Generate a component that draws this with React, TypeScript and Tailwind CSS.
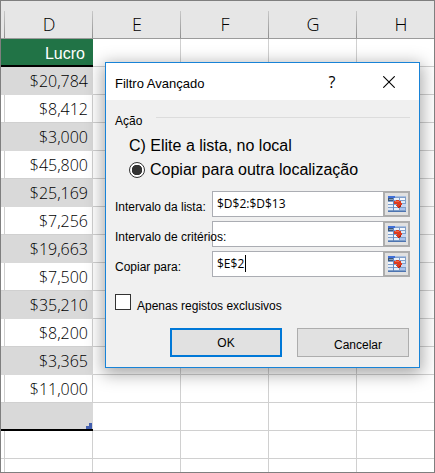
import React from 'react';

const profits = [
  '$20,784',
  '$8,412',
  '$3,000',
  '$45,800',
  '$25,169',
  '$7,256',
  '$19,663',
  '$7,500',
  '$35,210',
  '$8,200',
  '$3,365',
  '$11,000',
];

const otherColumns = ['E', 'F', 'G', 'H'];

const headClass =
  "h-[38px] border-b border-[#9b9b9b] bg-[#e6e6e6] bg-[linear-gradient(#c8c8c8,#8f8f8f)] bg-[length:1px_27px] bg-right-bottom bg-no-repeat p-0 pt-2 text-center text-lg leading-6 font-light";
const cellClass = 'h-7 border-r border-b border-[#d0d0d0] p-0';

function EmptyCells() {
  return (
    <>
      {otherColumns.map((name) => (
        <td key={name} className={cellClass} />
      ))}
      <td className="border-b border-[#d0d0d0] p-0" />
    </>
  );
}

function Sheet() {
  return (
    <table className="w-full min-w-[444px] table-fixed border-separate border-spacing-0 bg-white font-['Open_Sans',sans-serif] text-black">
      <colgroup>
        <col className="w-1" />
        <col className="w-[88px]" />
        <col className="w-[88px]" />
        <col className="w-[88px]" />
        <col className="w-[88px]" />
        <col className="w-[88px]" />
        <col />
      </colgroup>
      <thead>
        <tr>
          <th className={headClass} />
          <th className={headClass}>D</th>
          {otherColumns.map((name) => (
            <th key={name} className={headClass}>
              {name}
            </th>
          ))}
          <th className="border-b border-[#9b9b9b] bg-[#e6e6e6] p-0" />
        </tr>
      </thead>
      <tbody>
        <tr>
          <td className="h-7 border-b-2 border-black bg-[#217346] p-0" />
          <td className="h-7 border-b-2 border-black bg-[#217346] p-0 pt-1 pr-2 text-right font-['Liberation_Sans',Arial,sans-serif] text-base leading-5 text-white">
            Lucro
          </td>
          <EmptyCells />
        </tr>
        {profits.map((value, i) => {
          const tone = i % 2 === 0 ? 'bg-[#d9d9d9] border-[#d9d9d9]' : 'border-[#d0d0d0]';
          return (
            <tr key={value}>
              <td className={`h-7 border-r border-b p-0 ${tone}`} />
              <td
                className={`h-7 border-r border-b p-0 pr-1 text-right text-base leading-6 font-light ${tone}`}
              >
                {value}
              </td>
              <EmptyCells />
            </tr>
          );
        })}
        <tr>
          <td className="h-7 border-b-2 border-black bg-[#d9d9d9] p-0" />
          <td className="relative h-7 border-b-2 border-black bg-[#d9d9d9] p-0">
            <svg className="absolute right-px bottom-0 h-1.5 w-1.5" viewBox="0 0 6 6" aria-hidden="true">
              <path d="M3 0H6V6H0V3H3Z" fill="#4460b0" />
            </svg>
          </td>
          <EmptyCells />
        </tr>
        <tr>
          <td className={cellClass} />
          <td className={cellClass} />
          <EmptyCells />
        </tr>
        <tr>
          <td className="h-[13px] border-r border-[#d0d0d0] p-0" />
          <td className="border-r border-[#d0d0d0] p-0" />
          {otherColumns.map((name) => (
            <td key={name} className="border-r border-[#d0d0d0] p-0" />
          ))}
          <td className="p-0" />
        </tr>
      </tbody>
    </table>
  );
}

function RangeIcon() {
  return (
    <svg className="h-4 w-[18px]" viewBox="0 0 18 16" shapeRendering="crispEdges" aria-hidden="true">
      <rect width="18" height="16" fill="#7f9fca" />
      <rect width="7" height="2" fill="#3f6fd8" />
      <rect x="7" width="11" height="1" fill="#a9bfe0" />
      <rect y="2" width="5" height="3" fill="#3c5878" />
      <rect x="1" y="3" width="4" height="1" fill="#8b9db5" />
      <rect x="6" y="2" width="5" height="2" fill="#e8eff9" />
      <rect x="12" y="2" width="5" height="2" fill="#f5f8fd" />
      <rect x="12" y="5" width="5" height="2" fill="#dfe9f7" />
      <rect y="6" width="5" height="2" fill="#f5f8fd" />
      <rect y="9" width="5" height="2" fill="#e8eff9" />
      <rect y="12" width="5" height="2" fill="#dbe6f6" />
      <rect x="6" y="9" width="3" height="2" fill="#f5f8fd" />
      <rect x="6" y="12" width="5" height="2" fill="#e8eff9" />
      <rect x="13" y="8" width="5" height="3" fill="#c5d6f2" />
      <rect x="12" y="12" width="5" height="2" fill="#a9c3f0" />
      <rect y="15" width="18" height="1" fill="#4d74b0" />
      <rect x="5" y="2" width="1" height="13" fill="#6488bd" />
      <path d="M6 5L9 4L13 5L14 8L13 10L11 12L8 10L9 8L6 8Z" fill="#dc3a1e" />
      <path d="M7 5H11V6H7Z" fill="#f0684a" />
      <path d="M12 9H13V11H11V12H10V11Z" fill="#a8200f" />
    </svg>
  );
}

function RangeField({ id, label, value, caret }: { id: string; label: string; value: string; caret?: boolean }) {
  return (
    <div className="flex">
      <label htmlFor={id} className="z-10 w-[97px] shrink-0 pt-2 leading-4 whitespace-nowrap">
        {label}
      </label>
      <div className="relative flex h-[26px] min-w-0 flex-1">
        <input
          id={id}
          type="text"
          defaultValue={value}
          className="min-w-0 flex-1 border border-r-0 border-[#abadb3] bg-white pl-1 font-['Open_Sans',sans-serif] text-xs text-black outline-none"
        />
        {caret && <span className="absolute top-1 left-[33px] h-[17px] w-px bg-black" />}
        <button
          type="button"
          aria-label={`Selecionar ${label}`}
          className="flex w-[27px] shrink-0 items-center justify-center border-2 border-[#adadad] bg-[#e1e1e1]"
        >
          <RangeIcon />
        </button>
      </div>
    </div>
  );
}

function AdvancedFilterDialog() {
  return (
    <div
      role="dialog"
      aria-labelledby="dialog-title"
      className="absolute top-[61px] left-[104px] w-[315px] border border-[#1883d7] bg-[#f0f0f0] font-['Liberation_Sans',Arial,sans-serif] text-xs text-black shadow-[0_4px_16px_2px_rgba(0,0,0,0.35)]"
    >
      <div className="flex h-[37px] items-center bg-white pr-[18px] pl-[9px]">
        <h1 id="dialog-title" className="flex-1 pt-1 text-[13px] leading-4">
          Filtro Avançado
        </h1>
        <button type="button" aria-label="Ajuda" className="mr-[33px] h-6 w-6 font-['Open_Sans',sans-serif] text-base leading-6">
          ?
        </button>
        <button type="button" aria-label="Fechar" className="flex h-6 w-6 items-center justify-center">
          <svg className="h-3 w-3" viewBox="0 0 12 12" aria-hidden="true">
            <path d="M0.3 0.3L11.7 11.7M11.7 0.3L0.3 11.7" stroke="#000" strokeWidth="1.1" />
          </svg>
        </button>
      </div>

      <form className="px-[9px] pt-[13px] pb-[10px]" onSubmit={(e) => e.preventDefault()}>
        <fieldset>
          <div className="flex">
            <span className="w-[41px] leading-4">Ação</span>
            <span className="mt-1 h-px flex-1 bg-[#dcdcdc]" />
          </div>
          <div className="mt-[5px] pl-[14px] text-base leading-6">
            <p>C) Elite a lista, no local</p>
            <label className="flex items-center gap-[5px]">
              <input
                type="radio"
                name="action"
                defaultChecked
                className="h-4 w-4 shrink-0 appearance-none rounded-full border border-[#333] bg-white bg-[radial-gradient(circle,#333_5px,#fff_5.5px)]"
              />
              Copiar para outra localização
            </label>
          </div>
        </fieldset>

        <div className="mt-[9px] flex flex-col gap-1">
          <RangeField id="list-range" label="Intervalo da lista:" value="$D$2:$D$13" />
          <RangeField id="criteria-range" label="Intervalo de critérios:" value="" />
          <RangeField id="copy-to" label="Copiar para:" value="$E$2" caret />
        </div>

        <label className="mt-[17px] flex gap-[6px]">
          <input type="checkbox" className="h-4 w-4 shrink-0 appearance-none border border-[#333] bg-white" />
          <span className="pt-1 leading-4">Apenas registos exclusivos</span>
        </label>

        <div className="mt-[14px] flex justify-end gap-[15px] pr-px">
          <button type="submit" className="h-[29px] w-28 border-2 border-[#0078d7] bg-[#e1e1e1]">
            OK
          </button>
          <button type="button" className="h-[29px] w-28 border border-[#adadad] bg-[#e1e1e1] pt-1 pl-[10px]">
            Cancelar
          </button>
        </div>
      </form>
    </div>
  );
}

export default function App() {
  return (
    <main className="relative min-h-screen overflow-hidden border border-[#7f7f7f] bg-white">
      <Sheet />
      <AdvancedFilterDialog />
    </main>
  );
}
